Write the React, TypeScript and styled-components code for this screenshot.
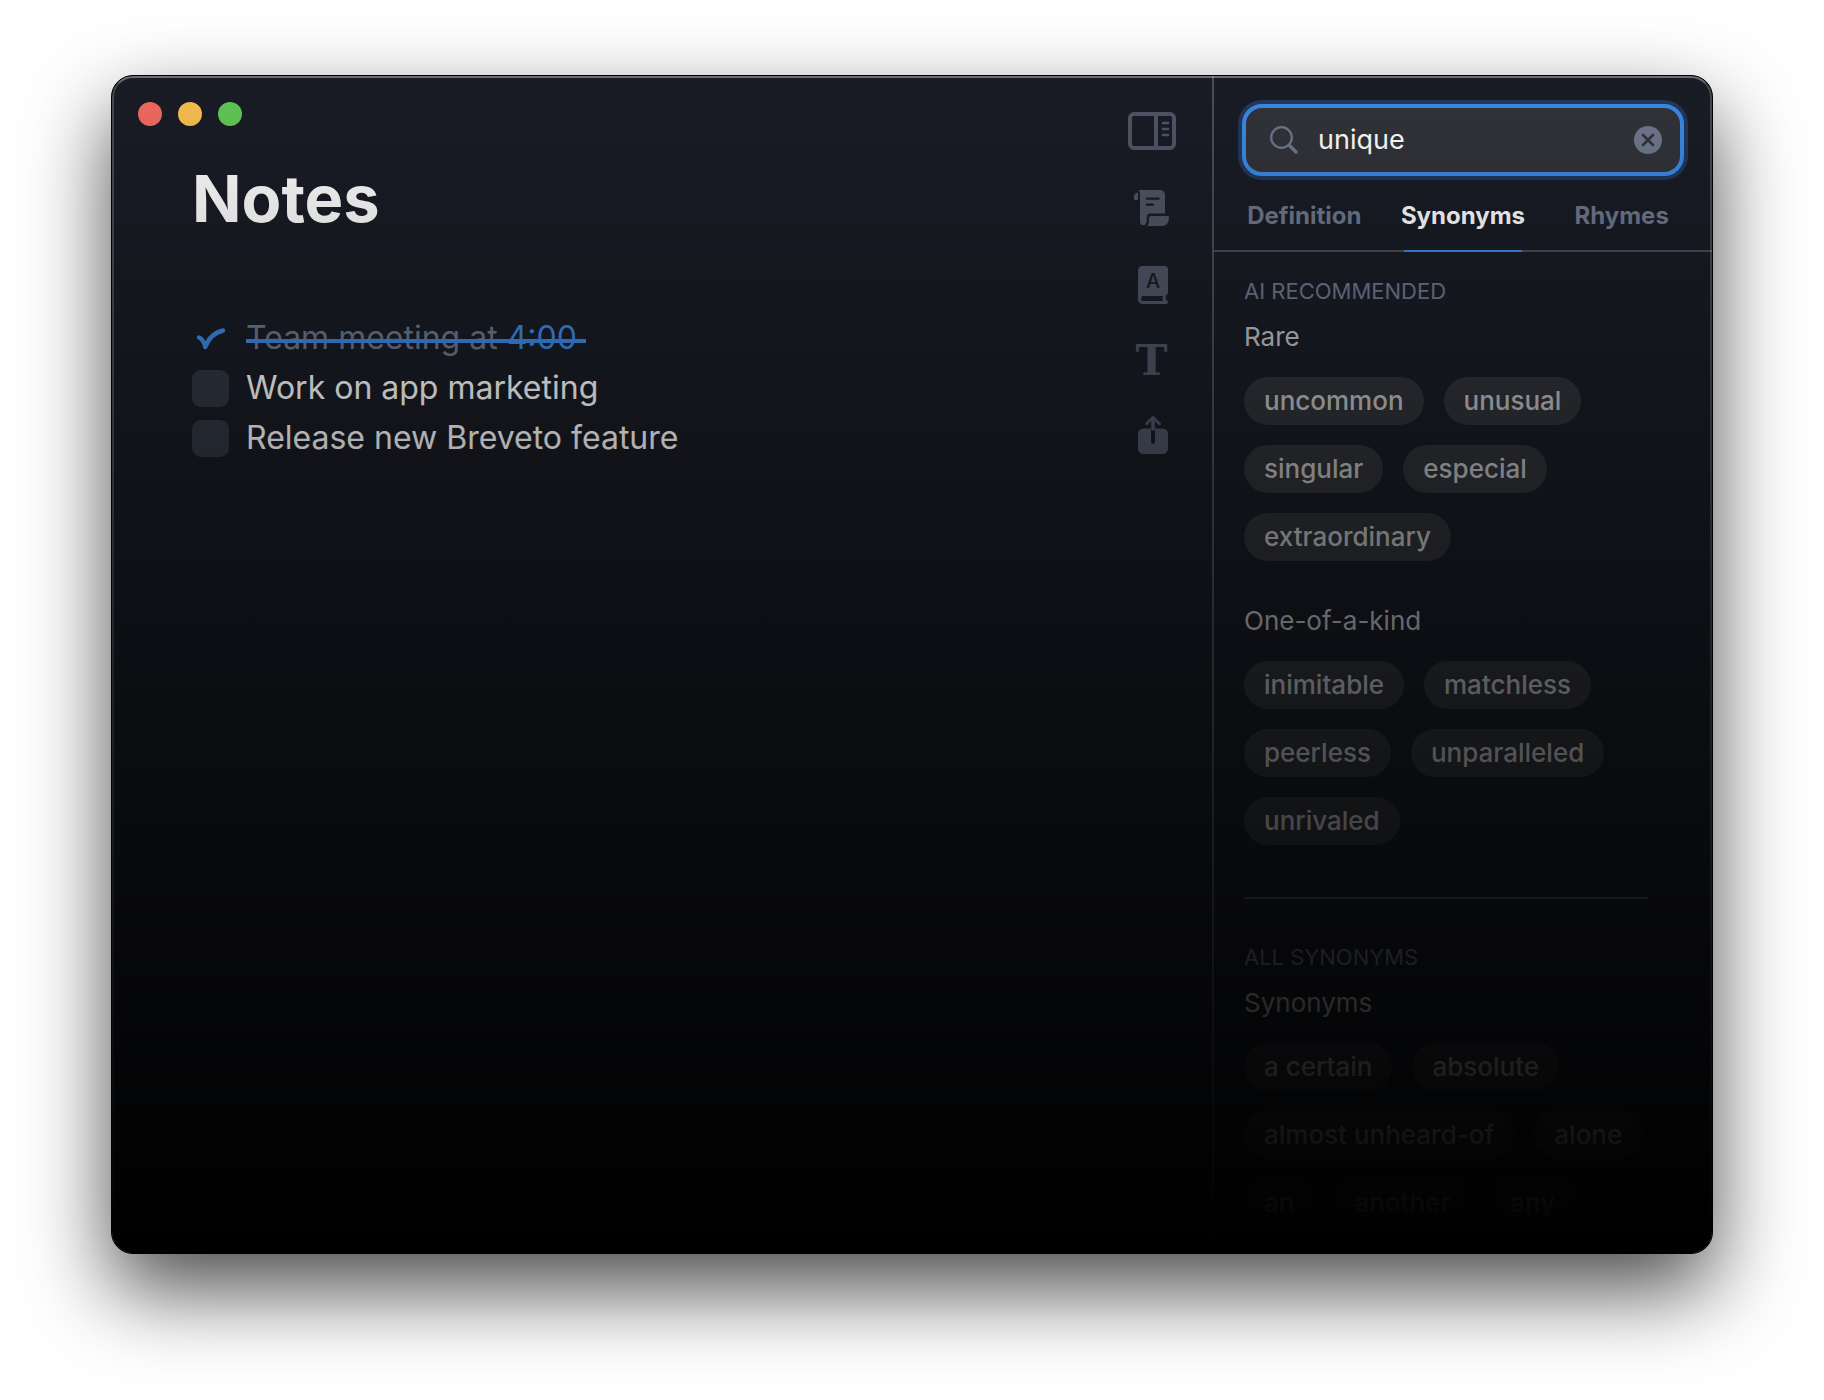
import React, { useState } from "react";
import styled, { createGlobalStyle } from "styled-components";

const color = {
  window: "#191c25",
  text: "#ffffff",
  heading: "#c0c0c3",
  muted: "#6e778c",
  icon: "#4f5566",
  line: "#4a4d56",
  field: "#313339",
  chip: "#2f3238",
  box: "#313743",
  accent: "#3c88e4",
  accentRing: "#20385c",
};

const GlobalStyle = createGlobalStyle`
  *, *::before, *::after { box-sizing: border-box; }
  body {
    margin: 0;
    background: #ffffff;
    font-family: Inter, "Liberation Sans", sans-serif;
  }
  button, input { font: inherit; color: inherit; }
  button { padding: 0; border: 0; background: none; cursor: pointer; }
`;

const Page = styled.div`
  padding: 75px 111px 147px;
`;

const Window = styled.div`
  position: relative;
  display: grid;
  grid-template-columns: minmax(0, 1fr) 500px;
  border: 1px solid #000000;
  border-radius: 22px;
  overflow: hidden;
  background: ${color.window};
  color: ${color.text};
  box-shadow: 0 36px 84px rgba(0, 0, 0, 0.7);

  &::before,
  &::after {
    content: "";
    position: absolute;
    inset: 0;
    border-radius: 21px;
    pointer-events: none;
  }

  &::before {
    z-index: 1;
    border: 2px solid rgba(255, 255, 255, 0.2);
    border-top-color: rgba(255, 255, 255, 0.36);
    border-bottom: 0;
  }

  &::after {
    z-index: 2;
    background: linear-gradient(rgba(0, 0, 0, 0), #000000);
  }
`;

const Editor = styled.main`
  display: flex;
  justify-content: space-between;
  padding: 26px 36px 26px 26px;
`;

const Document = styled.div`
  flex: 1;
  min-width: 0;
`;

const Lights = styled.div`
  display: flex;
  gap: 16px;
`;

const Light = styled.button<{ $tone: string }>`
  width: 24px;
  height: 24px;
  border-radius: 50%;
  background: ${(p) => p.$tone};
`;

const Title = styled.h1`
  margin: 33px 0 74px;
  padding-left: 54px;
  font-size: 65px;
  line-height: 80px;
  font-weight: 700;
`;

const Tasks = styled.ul`
  margin: 0;
  padding: 0 0 0 54px;
  list-style: none;
`;

const Task = styled.label`
  display: grid;
  grid-template-columns: 37px auto;
  justify-content: start;
  align-items: center;
  gap: 17px;
  font-size: 32px;
  line-height: 50px;
`;

const Tick = styled.input`
  grid-area: 1 / 1;
  appearance: none;
  width: 37px;
  height: 37px;
  margin: 0;
  border-radius: 9px;
  background: ${color.box};

  &:checked {
    background: none;
  }
`;

const TickMark = styled.svg`
  grid-area: 1 / 1;
  pointer-events: none;
`;

const TaskText = styled.span<{ $done: boolean }>`
  position: relative;
  grid-area: 1 / 2;
  white-space: pre;
  color: ${(p) => (p.$done ? color.muted : color.text)};

  &::after {
    content: "";
    position: absolute;
    top: 26px;
    right: 0;
    left: 0;
    height: 4px;
    background: ${(p) => (p.$done ? color.accent : "none")};
  }
`;

const Time = styled.span`
  color: ${color.accent};
`;

const Tools = styled.nav`
  display: flex;
  flex-direction: column;
  gap: 34px;
  padding-top: 8px;
`;

const Tool = styled.button`
  width: 48px;
  height: 42px;
  color: ${color.icon};

  svg {
    display: block;
    overflow: visible;
  }
`;

const Panel = styled.aside`
  border-left: 2px solid ${color.line};
`;

const Search = styled.div`
  display: flex;
  align-items: center;
  gap: 20px;
  height: 72px;
  margin: 28px 28px 6px;
  padding: 0 18px 0 24px;
  border: 4px solid ${color.accent};
  border-radius: 20px;
  background: ${color.field};
  box-shadow: 0 0 0 4px ${color.accentRing};
  color: ${color.muted};
`;

const SearchInput = styled.input`
  flex: 1;
  min-width: 0;
  padding: 0;
  border: 0;
  outline: 0;
  background: none;
  color: ${color.text};
  font-size: 27px;
  line-height: 32px;
`;

const Clear = styled.button`
  width: 28px;
  height: 28px;

  svg {
    display: block;
  }
`;

const Tabs = styled.div`
  display: grid;
  grid-template-columns: repeat(3, 1fr);
  height: 70px;
  padding: 0 11px;
  border-bottom: 2px solid ${color.line};
`;

const Tab = styled.button<{ $active: boolean }>`
  position: relative;
  color: ${(p) => (p.$active ? color.text : color.muted)};
  font-size: 24px;
  line-height: 32px;
  font-weight: 700;

  &::after {
    content: "";
    position: absolute;
    right: 20px;
    bottom: -2px;
    left: 20px;
    height: 2px;
    background: ${(p) => (p.$active ? color.accent : "none")};
  }
`;

const Results = styled.div`
  padding: 25px 64px 26px 30px;
`;

const Section = styled.section`
  & + & {
    margin-top: 52px;
    padding-top: 44px;
    border-top: 2px solid ${color.line};
  }
`;

const SectionLabel = styled.h2`
  margin: 0 0 16px;
  color: ${color.muted};
  font-size: 22px;
  line-height: 28px;
  font-weight: 400;
`;

const Sense = styled.div`
  & + & {
    margin-top: 44px;
  }
`;

const SenseTitle = styled.h3`
  margin: 0 0 24px;
  color: ${color.heading};
  font-size: 26px;
  line-height: 32px;
  font-weight: 400;
`;

const Chips = styled.div`
  display: flex;
  flex-wrap: wrap;
  gap: 20px;
  margin-right: -32px;
`;

const Chip = styled.button`
  height: 48px;
  padding: 0 20px;
  border-radius: 24px;
  background: ${color.chip};
  color: ${color.heading};
  font-size: 26px;
  line-height: 32px;
  font-weight: 500;
`;

const SidebarIcon = () => (
  <svg width="48" height="42" viewBox="0 0 48 42" fill="none" stroke="currentColor" aria-hidden="true">
    <rect x="2" y="4" width="44" height="34" rx="4" strokeWidth="4" />
    <path d="M28 4v34" strokeWidth="4" />
    <path d="M35 13h5M35 19h5M35 25h5" strokeWidth="2.7" strokeLinecap="round" />
  </svg>
);

const ScrollIcon = () => (
  <svg width="48" height="42" viewBox="0 0 48 42" fill="currentColor" aria-hidden="true">
    <path d="M10 6.4V14H7.2C6.4 14 6 13.6 6 12.8V10.5C6 8.3 7.6 6.7 10 6.4Z" />
    <path d="M10.5 4H32a5 5 0 0 1 5 5V27.5H22.500c-2.600 0-3.800 1.300-3.800 3.700V35c0 2.600-1.400 4.300-3.300 4.300-2.100 0-3.400-1.600-3.400-4V8.500C12 6.400 11.600 5 10.500 4Z" />
    <path d="M23.500 30H40c.7 0 1 .4 1 1 0 6-2.500 9-7 9H19c1.400-1.300 2-3 2-5V32.300C21 30.700 21.800 30 23.500 30Z" />
    <path d="M19 12.700H30.500M19 18.700H25" stroke={color.window} strokeWidth="2.300" strokeLinecap="round" />
  </svg>
);

const BookIcon = () => (
  <svg width="48" height="42" viewBox="0 0 48 42" aria-hidden="true">
    <path
      fill="currentColor"
      d="M14.500 4H36.500a3.500 3.500 0 0 1 3.500 3.500V31.500c-1.800 1.200-2.400 2.400-2.400 4s.6 2.500 1.800 3.400c.8.600.6 3.100-.9 3.100H14.500A4.500 4.500 0 0 1 10 37.500V8.500A4.500 4.500 0 0 1 14.500 4Z"
    />
    <path fill={color.window} d="M15.600 34H35c-.7 1.700-.7 3.300 0 5H15.600a2.500 2.500 0 0 1 0-5Z" />
    <text x="25" y="26" textAnchor="middle" fontFamily="Inter, sans-serif" fontSize="20" fontWeight="500" fill={color.window}>
      A
    </text>
  </svg>
);

const TypeIcon = () => (
  <svg width="48" height="42" viewBox="0 0 48 42" aria-hidden="true">
    <text x="23.500" y="37" textAnchor="middle" fontFamily="'DejaVu Serif', serif" fontSize="43" fontWeight="700" fill="currentColor">
      T
    </text>
  </svg>
);

const ShareIcon = () => (
  <svg width="48" height="42" viewBox="0 0 48 42" fill="none" strokeLinecap="round" strokeLinejoin="round" aria-hidden="true">
    <rect x="10" y="14.500" width="30" height="25.500" rx="5.500" fill="currentColor" />
    <path d="M25 16V28" stroke={color.window} strokeWidth="4" />
    <path d="M25 4V15" stroke="currentColor" strokeWidth="3.600" />
    <path d="M18.500 9.800 25 3.500l6.500 6.300" stroke="currentColor" strokeWidth="2.800" />
  </svg>
);

const SearchIcon = () => (
  <svg width="28" height="28" viewBox="0 0 28 28" fill="none" stroke="currentColor" strokeLinecap="round" aria-hidden="true">
    <circle cx="11.500" cy="11.500" r="10.300" strokeWidth="2.300" />
    <path d="M19.500 19.500l6.500 6.500" strokeWidth="3.300" />
  </svg>
);

const ClearIcon = () => (
  <svg width="28" height="28" viewBox="0 0 28 28" fill="none" aria-hidden="true">
    <circle cx="14" cy="14" r="14" fill="currentColor" />
    <path d="M9 9l10 10M19 9L9 19" stroke={color.field} strokeWidth="2.500" strokeLinecap="round" />
  </svg>
);

const tools = [
  { name: "Toggle sidebar", Icon: SidebarIcon },
  { name: "Outline", Icon: ScrollIcon },
  { name: "Dictionary", Icon: BookIcon },
  { name: "Typography", Icon: TypeIcon },
  { name: "Share", Icon: ShareIcon },
];

const lights = [
  { name: "Close", tone: "#f0695f" },
  { name: "Minimize", tone: "#f6be50" },
  { name: "Zoom", tone: "#60c655" },
];

const tabs = ["Definition", "Synonyms", "Rhymes"];

const sections = [
  {
    label: "AI RECOMMENDED",
    senses: [
      { title: "Rare", words: ["uncommon", "unusual", "singular", "especial", "extraordinary"] },
      { title: "One-of-a-kind", words: ["inimitable", "matchless", "peerless", "unparalleled", "unrivaled"] },
    ],
  },
  {
    label: "ALL SYNONYMS",
    senses: [
      {
        title: "Synonyms",
        words: ["a certain", "absolute", "almost unheard-of", "alone", "an", "another", "any"],
      },
    ],
  },
];

const initialTasks = [
  { text: "Team meeting at ", time: "4:00", done: true },
  { text: "Work on app marketing", time: "", done: false },
  { text: "Release new Breveto feature", time: "", done: false },
];

export default function App() {
  const [tasks, setTasks] = useState(initialTasks);
  const [query, setQuery] = useState("unique");
  const [tab, setTab] = useState("Synonyms");

  const toggle = (index: number) =>
    setTasks(tasks.map((t, i) => (i === index ? { ...t, done: !t.done } : t)));

  return (
    <>
      <GlobalStyle />
      <Page>
        <Window>
          <Editor>
            <Document>
              <Lights>
                {lights.map((l) => (
                  <Light key={l.name} $tone={l.tone} aria-label={l.name} />
                ))}
              </Lights>
              <Title>Notes</Title>
              <Tasks>
                {tasks.map((t, i) => (
                  <li key={t.text}>
                    <Task>
                      <Tick type="checkbox" checked={t.done} onChange={() => toggle(i)} />
                      {t.done && (
                        <TickMark width="37" height="37" viewBox="0 0 37 37" fill="none" aria-hidden="true">
                          <path
                            d="M7 17.500c2.800 1.200 5 4 6.300 9.500C16.500 18.500 22 12.500 31 10.500"
                            stroke={color.accent}
                            strokeWidth="4.400"
                            strokeLinecap="round"
                            strokeLinejoin="round"
                          />
                        </TickMark>
                      )}
                      <TaskText $done={t.done}>
                        {t.text}
                        {t.time && <Time>{t.time + "\u00a0"}</Time>}
                      </TaskText>
                    </Task>
                  </li>
                ))}
              </Tasks>
            </Document>
            <Tools aria-label="Tools">
              {tools.map(({ name, Icon }) => (
                <Tool key={name} aria-label={name}>
                  <Icon />
                </Tool>
              ))}
            </Tools>
          </Editor>
          <Panel>
            <Search>
              <SearchIcon />
              <SearchInput aria-label="Search word" value={query} onChange={(e) => setQuery(e.target.value)} />
              <Clear aria-label="Clear search" onClick={() => setQuery("")}>
                <ClearIcon />
              </Clear>
            </Search>
            <Tabs role="tablist">
              {tabs.map((name) => (
                <Tab key={name} role="tab" aria-selected={tab === name} $active={tab === name} onClick={() => setTab(name)}>
                  {name}
                </Tab>
              ))}
            </Tabs>
            <Results>
              {sections.map((s) => (
                <Section key={s.label}>
                  <SectionLabel>{s.label}</SectionLabel>
                  {s.senses.map((sense) => (
                    <Sense key={sense.title}>
                      <SenseTitle>{sense.title}</SenseTitle>
                      <Chips>
                        {sense.words.map((w) => (
                          <Chip key={w}>{w}</Chip>
                        ))}
                      </Chips>
                    </Sense>
                  ))}
                </Section>
              ))}
            </Results>
          </Panel>
        </Window>
      </Page>
    </>
  );
}
